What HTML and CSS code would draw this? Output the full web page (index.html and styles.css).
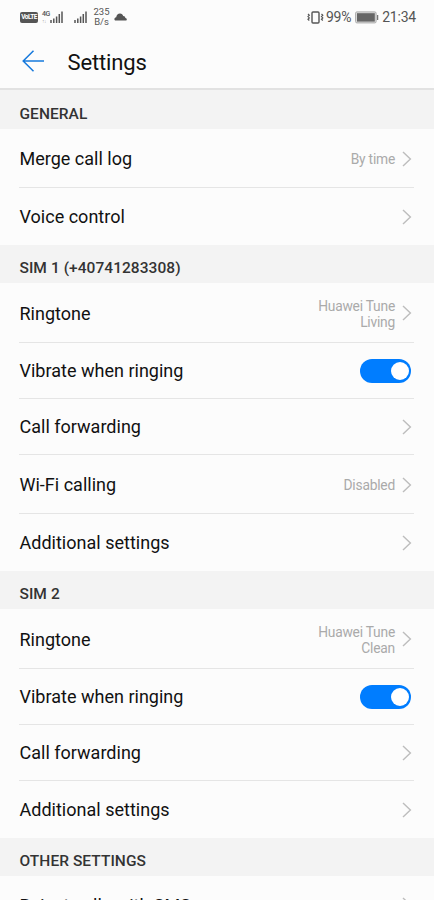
FILE: index.html
```html
<!DOCTYPE html>
<html lang="en">
<head>
<meta charset="utf-8">
<title>Settings</title>
<link rel="stylesheet" href="styles.css">
</head>
<body>
<svg class="defs" width="0" height="0"><symbol id="chevron" viewBox="0 0 10 16"><path d="M1 1l7.4 7L1 15" fill="none" stroke="#bdbdbd" stroke-width="1.4"/></symbol></svg>
<div class="status">
  <span class="volte">VoLTE</span>
  <div class="network"><span>4G</span><small>↑↓</small></div>
  <svg class="signal" width="13" height="14" viewBox="0 0 13 14"><path d="M1 10v3M3.8 8.5V13M6.6 6.5V13M9.3 4v9M12 1.5V13" stroke="#555" stroke-width="1.5"/></svg>
  <svg class="signal second" width="13" height="14" viewBox="0 0 13 14"><path d="M1 10v3M3.8 8.5V13M6.6 6.5V13M9.3 4v9M12 1.5V13" stroke="#555" stroke-width="1.5"/></svg>
  <div class="speed"><span>235</span><span>B/s</span></div>
  <svg class="cloud" width="13" height="8" viewBox="0 0 13 8"><path d="M1.5 7.5C-.2 7.2.1 4.6 2.2 4.3 2.5 2 4 .6 6 .6c1.8 0 2.7 1.1 3.2 2.4 1.4 0 2 .8 2.2 1.9 1.6.3 1.9 2.3.6 2.6z" fill="#555"/></svg>
  <div class="system">
    <svg width="17" height="13" viewBox="0 0 17 13"><rect x="5" y="1" width="7" height="11" rx="1" fill="none" stroke="#555" stroke-width="1.4"/><path d="M1 3l1.3 1.3L1 5.6l1.3 1.3L1 8.2l1.3 1.3M14.5 3l1.3 1.3-1.3 1.3 1.3 1.3-1.3 1.3 1.3 1.3" fill="none" stroke="#555" stroke-width="1.2"/></svg>
    <span class="percent">99%</span>
    <svg class="battery" width="24" height="13" viewBox="0 0 24 13"><rect x=".6" y=".9" width="20.5" height="11" rx="1.3" fill="#ddd" stroke="#aaa"/><path d="M2 2.2h17.8v8.4H2z" fill="#666"/><path d="M22.6 4v5" stroke="#777" stroke-width="1.3"/></svg>
    <span class="clock">21:34</span>
  </div>
</div>
<header>
  <svg class="back" width="23" height="22" viewBox="0 0 23 22"><path d="M11.5.8L1.2 11l10.3 10.2M1.5 11H22" fill="none" stroke="#1679dc" stroke-width="1.5"/></svg>
  <h1>Settings</h1>
</header>
<main>
  <h2 class="first">GENERAL</h2>
  <div class="row tall"><span class="label">Merge call log</span><span class="value">By time</span><svg class="chev"><use href="#chevron"/></svg></div>
  <div class="row last"><span class="label">Voice control</span><svg class="chev"><use href="#chevron"/></svg></div>
  <h2>SIM 1 (+40741283308)</h2>
  <div class="row tune"><span class="label">Ringtone</span><span class="value">Huawei Tune<br>Living</span><svg class="chev"><use href="#chevron"/></svg></div>
  <div class="row"><span class="label">Vibrate when ringing</span><span class="toggle"></span></div>
  <div class="row"><span class="label">Call forwarding</span><svg class="chev"><use href="#chevron"/></svg></div>
  <div class="row tall"><span class="label">Wi-Fi calling</span><span class="value">Disabled</span><svg class="chev"><use href="#chevron"/></svg></div>
  <div class="row last"><span class="label">Additional settings</span><svg class="chev"><use href="#chevron"/></svg></div>
  <h2>SIM 2</h2>
  <div class="row tune"><span class="label">Ringtone</span><span class="value">Huawei Tune<br>Clean</span><svg class="chev"><use href="#chevron"/></svg></div>
  <div class="row"><span class="label">Vibrate when ringing</span><span class="toggle"></span></div>
  <div class="row"><span class="label">Call forwarding</span><svg class="chev"><use href="#chevron"/></svg></div>
  <div class="row last"><span class="label">Additional settings</span><svg class="chev"><use href="#chevron"/></svg></div>
  <h2>OTHER SETTINGS</h2>
  <div class="row reject"><span class="label">Reject calls with SMS</span><svg class="chev"><use href="#chevron"/></svg></div>
</main>
</body>
</html>
```
FILE: styles.css
```css
* { box-sizing: border-box; }
body { margin: 0; height: 900px; overflow: hidden; background: #fcfcfc; color: #111; font-family: Roboto, sans-serif; }
.defs { display: block; }
.status { display: flex; align-items: center; height: 34px; padding: 0 18px 0 20px; color: #555; }
.volte { width: 18px; height: 11px; border-radius: 2px; background: #555; color: #fff; font-size: 6.5px; line-height: 11px; font-weight: 700; text-align: center; letter-spacing: -.5px; }
.network { display: flex; flex-direction: column; width: 8px; margin-left: 4px; font-size: 7px; line-height: 7px; font-weight: 500; letter-spacing: -.4px; }
.network small { font-size: 5px; line-height: 6px; color: #aaa; }
.signal { margin-left: 0; }
.signal.second { margin-left: 11px; }
.speed { display: flex; flex-direction: column; align-items: center; width: 17px; margin-left: 6px; font-size: 9.5px; line-height: 10px; }
.cloud { margin-left: 4px; }
.system { display: flex; align-items: center; margin-left: auto; }
.percent { font-size: 14px; letter-spacing: -.3px; margin-left: 2px; }
.battery { margin-left: 4px; }
.clock { margin-left: 3px; font-size: 14px; letter-spacing: -.2px; }
header { display: flex; align-items: center; height: 56px; padding: 0 22px; border-bottom: 2px solid #e2e2e2; }
h1 { margin: 3px 0 0 22.5px; font-size: 22px; line-height: 26px; font-weight: 400; letter-spacing: -.15px; }
h2 { display: flex; align-items: center; height: 38px; margin: 0; padding: 8px 19px 0 19.5px; background: #f3f3f3; color: #333; font-size: 15.5px; font-weight: 500; letter-spacing: .05px; }
.first { height: 39px; }
.row { display: flex; align-items: center; height: 56px; margin: 0 20px 0 19px; padding: 1px 3px 0 0; border-bottom: 1px solid #e5e5e5; }
.tall { height: 59px; padding-top: 2px; }
.tune { height: 60px; padding-top: 2px; }
.last { height: 57px; padding-top: 2px; border-bottom-color: transparent; }
.reject { height: 58px; padding-top: 2px; }
.label { font-size: 18px; line-height: 24px; margin-right: auto; padding-left: .5px; letter-spacing: .01px; }
.value { color: #aaa; font-size: 13.8px; line-height: 16px; text-align: right; letter-spacing: -.22px; margin-right: 7px; }
.chev { width: 10px; height: 16px; margin-right: -1px; position: relative; top: -.5px; }
.toggle { width: 51px; height: 24px; border-radius: 12px; background: #007dff; display: flex; align-items: center; justify-content: flex-end; padding-right: 2px; }
.toggle::after { content: ""; width: 18px; height: 18px; border-radius: 50%; background: #fff; }
```
